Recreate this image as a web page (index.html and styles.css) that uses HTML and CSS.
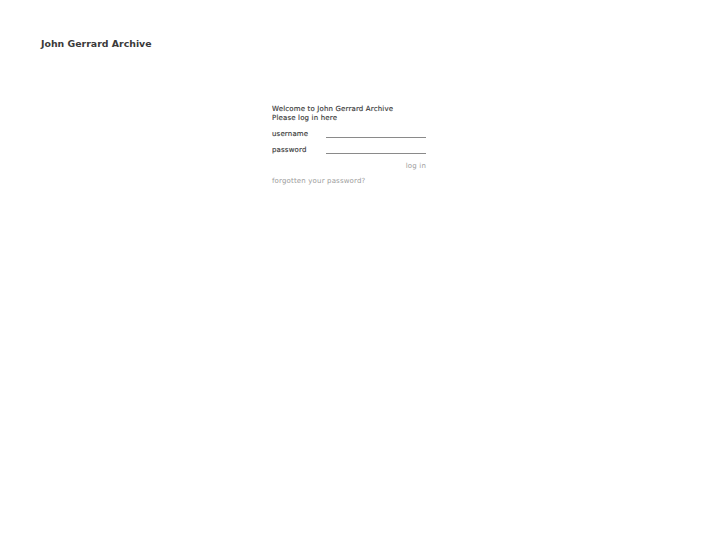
FILE: index.html
```html
<!DOCTYPE html>
<html lang="en">
<head>
<meta charset="utf-8">
<title>John Gerrard Archive</title>
<link rel="stylesheet" href="styles.css">
</head>
<body>
<header class="site-header">
  <h1 class="site-title">John Gerrard Archive</h1>
</header>
<main class="login">
  <p class="welcome">Welcome to John Gerrard Archive<br>Please log in here</p>
  <form class="login-form">
    <label class="row"><span class="label">username</span><input class="field" type="text"></label>
    <label class="row"><span class="label">password</span><input class="field" type="password"></label>
    <div class="submit-row"><a class="submit" href="#">log in</a></div>
  </form>
  <a class="forgot" href="#">forgotten your password?</a>
</main>
</body>
</html>
```

FILE: styles.css
```css
html, body {
  margin: 0;
  padding: 0;
  background: #fff;
}
body {
  font-family: "DejaVu Sans", Verdana, sans-serif;
  color: #333;
}
.site-header {
  padding: 38px 0 0 41px;
}
.site-title {
  margin: 0;
  font-size: 9.4px;
  line-height: 12px;
  font-weight: bold;
  color: #3a3a3a;
}
.login {
  margin: 54.5px 0 0 272px;
  width: 154px;
  font-size: 7px;
  letter-spacing: 0.16px;
  line-height: 9px;
  -webkit-text-stroke: 0.15px currentColor;
}
.welcome {
  margin: 0;
  color: #3a3a3a;
}
.login-form {
  margin: 0;
}
.row {
  display: flex;
  align-items: flex-end;
  height: 16px;
}
.label {
  width: 54px;
  color: #3a3a3a;
}
.field {
  width: 100px;
  height: 10px;
  padding: 0;
  margin: 0 0 1px 0;
  border: none;
  border-bottom: 1px solid #8a8a8a;
  background: transparent;
  outline: none;
  box-sizing: border-box;
}
.submit-row {
  margin-top: 7px;
  text-align: right;
}
.submit, .forgot {
  color: #9c9c9c;
  text-decoration: none;
  -webkit-text-stroke: 0;
}
.forgot {
  display: block;
  margin-top: 6px;
}
```
